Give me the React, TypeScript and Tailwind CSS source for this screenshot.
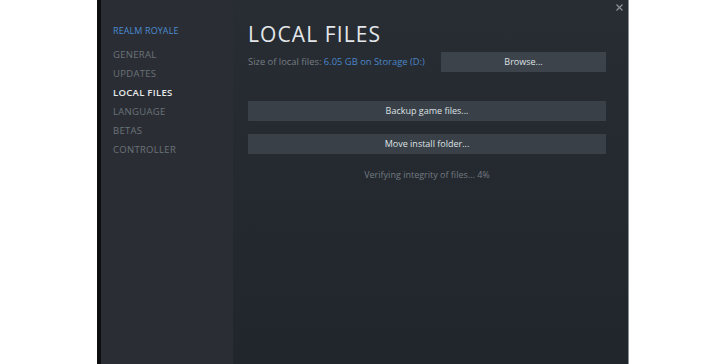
import React from "react";

const navItems = ["GENERAL", "UPDATES", "LOCAL FILES", "LANGUAGE", "BETAS", "CONTROLLER"];

export default function App() {
  return (
    <div
      className="flex w-[726px] h-[364px] bg-white overflow-hidden"
      style={{ fontFamily: '"Open Sans", "Noto Sans", Arial, sans-serif' }}
    >
      <div className="w-[97px] shrink-0" />
      <div className="flex w-[532px] shrink-0 h-full border-l-4 border-[#0c0d0e] border-r border-r-[#8a9096]">
        <div className="w-[132px] shrink-0 bg-[#2a2e34] pl-[12px] pt-[25px] flex flex-col">
          <div className="text-[9px] leading-[12px] text-[#4b8bd0] tracking-[0.1px]">REALM ROYALE</div>
          <div className="flex flex-col mt-[12px] gap-[7px]">
            {navItems.map((n) => (
              <div
                key={n}
                className={
                  "text-[9.5px] leading-[12px] tracking-[0.3px] " +
                  (n === "LOCAL FILES" ? "text-[#e8eaec] font-semibold" : "text-[#6b7279]")
                }
              >
                {n}
              </div>
            ))}
          </div>
        </div>
        <div className="relative flex-1 bg-gradient-to-b from-[#282d33] to-[#21262c] pl-[15px] pr-[22px] pt-[20px] flex flex-col">
          <svg
            className="absolute right-[5px] top-[4px]"
            width="7"
            height="7"
            viewBox="0 0 7 7"
            fill="none"
            stroke="#8d939a"
            strokeWidth="1.2"
          >
            <path d="M0.5 0.5 L6.5 6.5 M6.5 0.5 L0.5 6.5" />
          </svg>
          <div className="text-[21px] leading-[28px] tracking-[1.1px] text-[#e4e7ea]">LOCAL FILES</div>
          <div className="flex items-center justify-between mt-[4px]">
            <div className="text-[9.4px] text-[#767d84]">
              Size of local files: <span className="text-[#4b86c7]">6.05 GB on Storage (D:)</span>
            </div>
            <div className="w-[165px] h-[20px] bg-[#3d434b] flex items-center justify-center text-[9px] text-[#dde1e4]">
              Browse...
            </div>
          </div>
          <div className="mt-[29px] h-[20px] bg-[#3a4048] flex items-center justify-center text-[9px] text-[#dde1e4]">
            Backup game files...
          </div>
          <div className="mt-[13px] h-[20px] bg-[#3a4048] flex items-center justify-center text-[9px] text-[#dde1e4]">
            Move install folder...
          </div>
          <div className="mt-[14px] text-center text-[9px] leading-[14px] text-[#737a81]">
            Verifying integrity of files... 4%
          </div>
        </div>
      </div>
    </div>
  );
}
